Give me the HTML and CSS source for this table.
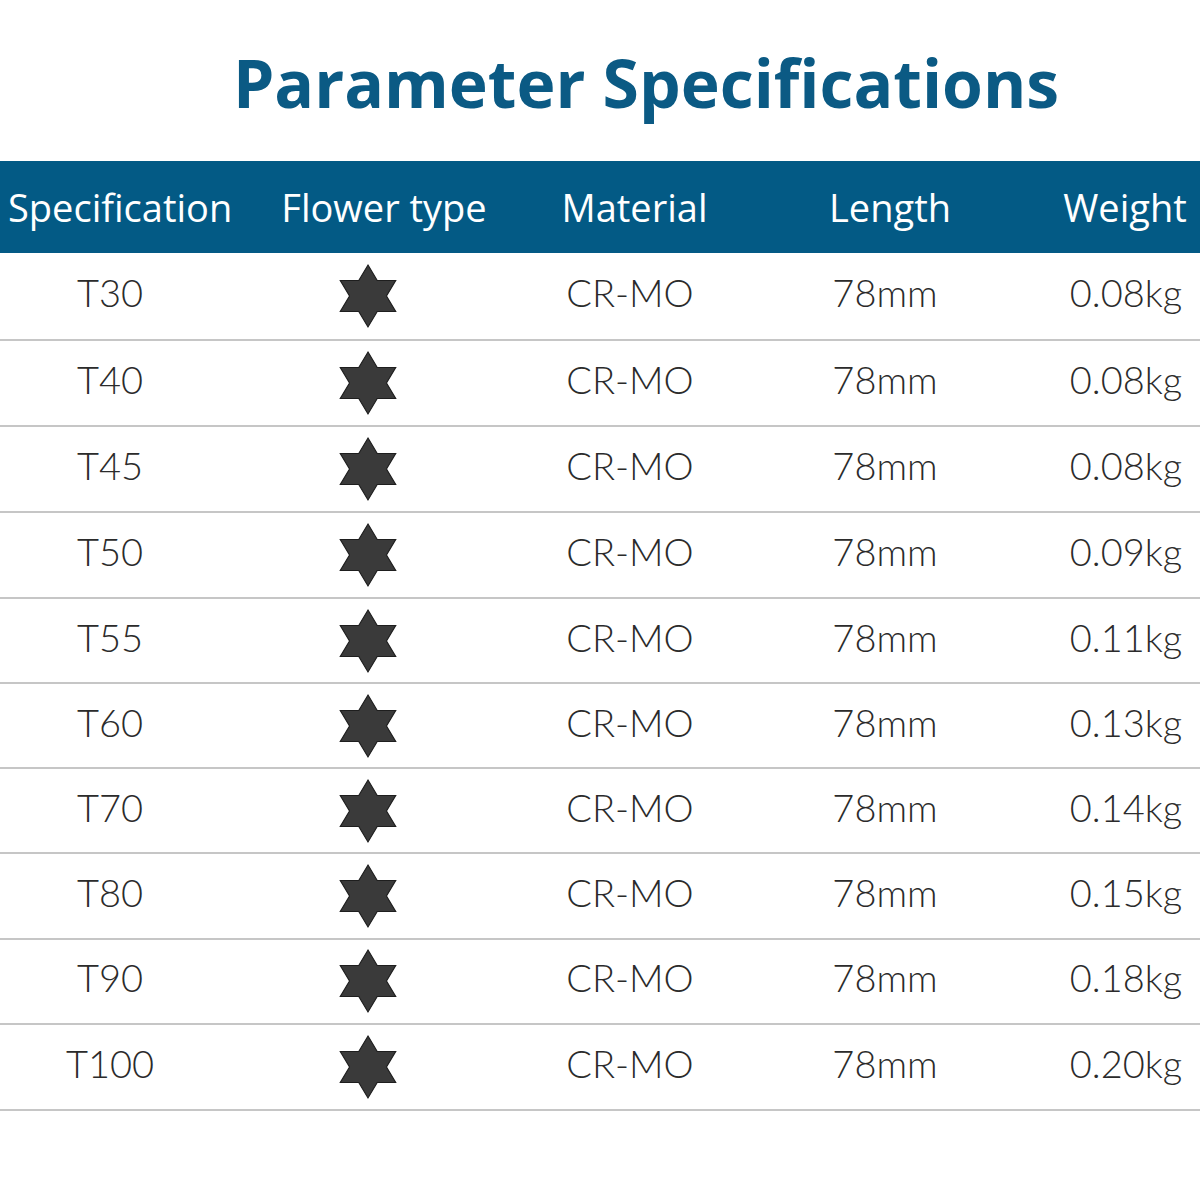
FILE: index.html
```html
<!DOCTYPE html>
<html>
<head>
<meta charset="utf-8">
<link rel="stylesheet" href="styles.css">
</head>
<body>
<div class="page">
  <header class="title-wrap"><h1 class="title">Parameter Specifications</h1></header>
  <div class="table">
    <div class="row head">
      <div class="c c1">Specification</div>
      <div class="c c2">Flower type</div>
      <div class="c c3">Material</div>
      <div class="c c4">Length</div>
      <div class="c c5">Weight</div>
    </div>
    <div class="body" id="body"></div>
  </div>
</div>
<template id="star"><svg class="star" viewBox="0 0 60 64" width="64" height="66" preserveAspectRatio="none"><path d="M30 2 L38.66 17 L55.98 17 L47.32 32 L55.98 47 L38.66 47 L30 62 L21.34 47 L4.02 47 L12.68 32 L4.02 17 L21.34 17 Z" fill="#3a3a3a" stroke="#1e1e1e" stroke-width="1.1" stroke-linejoin="miter"/></svg></template>
<script src="app.js"></script>
</body>
</html>
```
FILE: app.js
```js
const data = [
  ["T30","0.08kg"],["T40","0.08kg"],["T45","0.08kg"],["T50","0.09kg"],["T55","0.11kg"],
  ["T60","0.13kg"],["T70","0.14kg"],["T80","0.15kg"],["T90","0.18kg"],["T100","0.20kg"]
];
const body = document.getElementById('body');
const star = document.getElementById('star').innerHTML;
data.forEach(([s,w]) => {
  const r = document.createElement('div');
  r.className = 'row data';
  r.innerHTML = `<div class="c c1 t">${s}</div><div class="c c2">${star}</div><div class="c c3 t">CR-MO</div><div class="c c4 t">78mm</div><div class="c c5 t">${w}</div>`;
  body.appendChild(r);
});
```
FILE: styles.css
```css
html, body { margin: 0; padding: 0; background: #fff; }
.page { width: 1200px; }
.title-wrap { height: 161px; box-sizing: border-box; padding-top: 49px; padding-left: 92px; text-align: center; }
.title { margin: 0; font-family: "Open Sans", sans-serif; font-weight: 700; font-size: 66px; line-height: 66px; color: #0b5a84; letter-spacing: 0; }
.table { width: 1200px; }
.row { display: grid; grid-template-columns: 224px 288px 236px 304px 148px; align-items: center; }
.c { text-align: center; }
.head { height: 92px; background: #035a85; color: #fff; font-family: "Open Sans", sans-serif; font-size: 38px; }
.head .c1 { padding-left: 8px; text-align: left; white-space: nowrap; }
.head .c2 { padding-left: 32px; }
.head .c3 { padding-left: 9px; }
.head .c4 { padding-right: 20px; }
.head .c5 { padding-right: 2px; }
.data { height: 84px; border-bottom: 2px solid #c6c6c6; font-family: Lato, sans-serif; font-weight: 300; font-size: 38px; color: #2b2b2b; }
.data:first-child { height: 86px; }
.data:nth-child(n+5) { height: 83px; }
.data:nth-child(n+8) { height: 83.5px; }
.data .t { padding-bottom: 8px; }
.data .c1 { padding-right: 4px; }
.data .c4 { padding-right: 30px; }
.data .c5 { padding-left: 0; }
.star { display: block; margin: 0 auto; }
```
